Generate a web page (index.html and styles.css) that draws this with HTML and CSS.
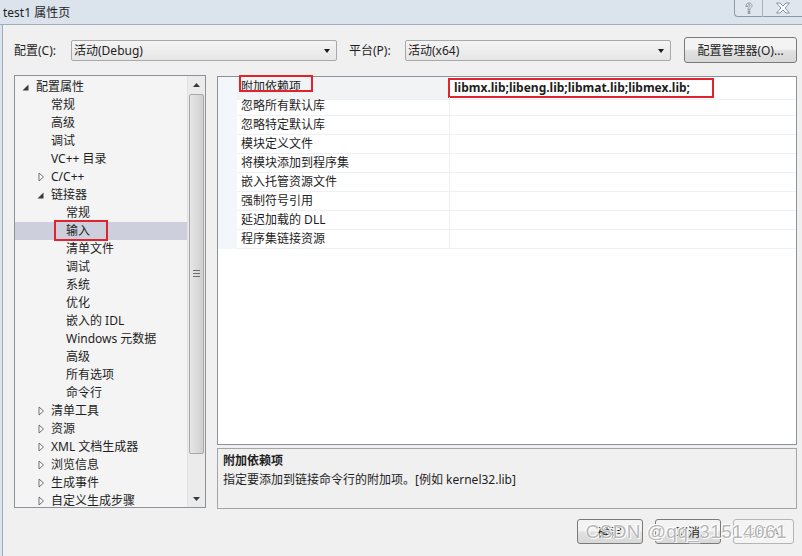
FILE: index.html
```html
<!DOCTYPE html>
<html>
    <head>
        <title>test1 属性页</title>
        <link rel="stylesheet" href="styles.css">
    </head>
    <body>
        <div class="titlebar">
            <span class="title">test1 属性页</span>
            <div class="caption-btns">
                <div class="cap-btn help">
                    <svg width="12" height="13" viewBox="0 0 12 13">
                        <path d="M3 4.5 C3 2 4.5 1 6 1 C7.8 1 9 2.2 9 3.8 C9 5.4 7.5 5.8 6.8 6.8 L6.8 8.2 L5.2 8.2 L5.2 6.4 C5.6 5.2 7.3 4.8 7.3 3.8 C7.3 3 6.7 2.5 6 2.5 C5.2 2.5 4.7 3.1 4.7 4.5 Z" fill="#fff" stroke="#7d8896" stroke-width="0.9"/>
                        <rect x="5.2" y="9.6" width="1.6" height="1.8" fill="#fff" stroke="#7d8896" stroke-width="0.9"/>
                    </svg>
                </div>
                <div class="cap-btn close">
                    <svg width="16" height="12" viewBox="0 0 16 12">
                        <path d="M1.5 1 L5 1 L8 4 L11 1 L14.5 1 L10 6 L14.5 11 L11 11 L8 8 L5 11 L1.5 11 L6 6 Z" fill="#fff" stroke="#7d8896" stroke-width="0.9"/>
                    </svg>
                </div>
            </div>
        </div>

        <div class="dialog">
            <div class="config-row">
                <label class="cfg-label">配置(C):</label>
                <div class="combo"><span>活动(Debug)</span><i class="drop"></i></div>
                <label class="cfg-label plat">平台(P):</label>
                <div class="combo"><span>活动(x64)</span><i class="drop"></i></div>
                <button class="btn cfg-btn">配置管理器(O)...</button>
            </div>

            <div class="main">
                <div class="tree">
                    <div class="tree-list">
                        <div class="node l0"><span class="tw"><svg class="open" width="7" height="7"><polygon points="6.5,0.5 6.5,6.5 0.5,6.5" fill="#3a3a3a"/></svg></span>配置属性</div>
                        <div class="node l1"><span class="tw"></span>常规</div>
                        <div class="node l1"><span class="tw"></span>高级</div>
                        <div class="node l1"><span class="tw"></span>调试</div>
                        <div class="node l1"><span class="tw"></span>VC++ 目录</div>
                        <div class="node l1"><span class="tw"><svg class="shut" width="7" height="10"><polygon points="1,1 5.5,5 1,9" fill="#fff" stroke="#6f6f6f"/></svg></span>C/C++</div>
                        <div class="node l1"><span class="tw"><svg class="open" width="7" height="7"><polygon points="6.5,0.5 6.5,6.5 0.5,6.5" fill="#3a3a3a"/></svg></span>链接器</div>
                        <div class="node l2"><span class="tw"></span>常规</div>
                        <div class="node l2 selected"><span class="tw"></span><span class="marked">输入</span></div>
                        <div class="node l2"><span class="tw"></span>清单文件</div>
                        <div class="node l2"><span class="tw"></span>调试</div>
                        <div class="node l2"><span class="tw"></span>系统</div>
                        <div class="node l2"><span class="tw"></span>优化</div>
                        <div class="node l2"><span class="tw"></span>嵌入的 IDL</div>
                        <div class="node l2"><span class="tw"></span>Windows 元数据</div>
                        <div class="node l2"><span class="tw"></span>高级</div>
                        <div class="node l2"><span class="tw"></span>所有选项</div>
                        <div class="node l2"><span class="tw"></span>命令行</div>
                        <div class="node l1"><span class="tw"><svg class="shut" width="7" height="10"><polygon points="1,1 5.5,5 1,9" fill="#fff" stroke="#6f6f6f"/></svg></span>清单工具</div>
                        <div class="node l1"><span class="tw"><svg class="shut" width="7" height="10"><polygon points="1,1 5.5,5 1,9" fill="#fff" stroke="#6f6f6f"/></svg></span>资源</div>
                        <div class="node l1"><span class="tw"><svg class="shut" width="7" height="10"><polygon points="1,1 5.5,5 1,9" fill="#fff" stroke="#6f6f6f"/></svg></span>XML 文档生成器</div>
                        <div class="node l1"><span class="tw"><svg class="shut" width="7" height="10"><polygon points="1,1 5.5,5 1,9" fill="#fff" stroke="#6f6f6f"/></svg></span>浏览信息</div>
                        <div class="node l1"><span class="tw"><svg class="shut" width="7" height="10"><polygon points="1,1 5.5,5 1,9" fill="#fff" stroke="#6f6f6f"/></svg></span>生成事件</div>
                        <div class="node l1"><span class="tw"><svg class="shut" width="7" height="10"><polygon points="1,1 5.5,5 1,9" fill="#fff" stroke="#6f6f6f"/></svg></span>自定义生成步骤</div>
                    </div>
                    <div class="vscroll">
                        <div class="arrow up"><svg width="7" height="4"><polygon points="3.5,0 7,4 0,4" fill="#3a3a3a"/></svg></div>
                        <div class="track">
                            <div class="thumb"><span class="grip"></span></div>
                        </div>
                        <div class="arrow down"><svg width="7" height="4"><polygon points="0,0 7,0 3.5,4" fill="#3a3a3a"/></svg></div>
                    </div>
                </div>

                <div class="right">
                    <div class="grid">
                        <div class="prow first">
                            <div class="gutter"></div>
                            <div class="pname marked-name">附加依赖项</div>
                            <div class="pval marked-val">libmx.lib;libeng.lib;libmat.lib;libmex.lib;</div>
                        </div>
                        <div class="prow"><div class="gutter"></div><div class="pname">忽略所有默认库</div><div class="pval"></div></div>
                        <div class="prow"><div class="gutter"></div><div class="pname">忽略特定默认库</div><div class="pval"></div></div>
                        <div class="prow"><div class="gutter"></div><div class="pname">模块定义文件</div><div class="pval"></div></div>
                        <div class="prow"><div class="gutter"></div><div class="pname">将模块添加到程序集</div><div class="pval"></div></div>
                        <div class="prow"><div class="gutter"></div><div class="pname">嵌入托管资源文件</div><div class="pval"></div></div>
                        <div class="prow"><div class="gutter"></div><div class="pname">强制符号引用</div><div class="pval"></div></div>
                        <div class="prow"><div class="gutter"></div><div class="pname">延迟加载的 DLL</div><div class="pval"></div></div>
                        <div class="prow"><div class="gutter"></div><div class="pname">程序集链接资源</div><div class="pval"></div></div>
                    </div>
                    <div class="desc">
                        <div class="desc-title">附加依赖项</div>
                        <div class="desc-text">指定要添加到链接命令行的附加项。[例如 kernel32.lib]</div>
                    </div>
                </div>
            </div>

            <div class="buttons">
                <button class="btn">确定</button>
                <button class="btn">取消</button>
                <button class="btn apply" disabled>应用(A)</button>
                <span class="watermark">CSDN @qq_31514061</span>
            </div>
        </div>
    </body>
</html>
```

FILE: styles.css
```css
html, body {
    margin: 0;
    padding: 0;
}
body {
    width: 802px;
    height: 556px;
    overflow: hidden;
    background: #dbe3ec;
    font-family: "Noto Sans", "Noto Sans CJK SC", sans-serif;
    font-size: 12px;
    color: #1e1e1e;
}
.titlebar {
    height: 25px;
    display: flex;
    align-items: center;
    padding-left: 3px;
    position: relative;
    border-bottom: 1px solid #a3acb7;
    box-sizing: border-box;
}
.title {
    font-size: 12px;
}
.caption-btns {
    position: absolute;
    right: 0;
    top: 0;
    display: flex;
}
.cap-btn {
    height: 16px;
    display: flex;
    align-items: center;
    justify-content: center;
    border-bottom: 1px solid #8d99a8;
    background: #dfe6ee;
}
.help {
    width: 27px;
    border-left: 1px solid #8d99a8;
    border-right: 1px solid #a7b2be;
    border-bottom-left-radius: 4px;
}
.close {
    width: 39px;
}

.dialog {
    margin-left: 2px;
    border-left: 1px solid #a3acb7;
    background: #f0f0f0;
    height: 531px;
    box-sizing: border-box;
    padding: 12px 5px 0 11px;
    position: relative;
}

/* config row */
.config-row {
    display: flex;
    align-items: center;
    height: 26px;
}
.cfg-label {
    width: 57px;
}
.cfg-label.plat {
    margin-left: 12px;
    width: 56px;
}
.combo {
    width: 266px;
    height: 21px;
    box-sizing: border-box;
    border: 1px solid #a9a9a9;
    border-radius: 2px;
    background: linear-gradient(#f4f4f4, #e6e6e6);
    display: flex;
    align-items: center;
    padding-left: 2px;
    position: relative;
}
.drop {
    position: absolute;
    right: 6px;
    top: 8px;
    width: 0;
    height: 0;
    border-left: 3.5px solid transparent;
    border-right: 3.5px solid transparent;
    border-top: 4px solid #1a1a1a;
}
.btn {
    font-family: inherit;
    font-size: 12px;
    color: #1e1e1e;
    border: 1px solid #7a7a7a;
    border-radius: 3px;
    background: linear-gradient(#f3f3f3 45%, #e0e0e0 55%, #d8d8d8);
    padding: 0;
}
.cfg-btn {
    margin-left: 13px;
    width: 113px;
    height: 26px;
}

/* main */
.main {
    display: flex;
    align-items: flex-start;
    margin-top: 12px;
    height: 434px;
}
.tree {
    width: 192px;
    height: 433px;
    box-sizing: border-box;
    border: 1px solid #8d9199;
    background: #f4f4f4;
    display: flex;
    overflow: hidden;
}
.tree-list {
    flex: 1;
    padding-top: 2px;
    overflow: hidden;
}
.node {
    height: 18px;
    line-height: 18px;
    display: flex;
    align-items: center;
    white-space: nowrap;
    position: relative;
}
.node.l0 { padding-left: 6px; }
.node.l1 { padding-left: 21px; }
.node.l2 { padding-left: 36px; }
.node.selected {
    background: #cdd0dc;
}
.tw {
    width: 15px;
    height: 18px;
    display: flex;
    align-items: center;
    flex-shrink: 0;
}
.tw .open {
    margin-left: 1px;
}
.tw .shut {
    margin-left: 2px;
}
.marked {
    position: relative;
}
.marked::after {
    content: "";
    position: absolute;
    left: -12px;
    top: -2px;
    width: 50px;
    height: 17px;
    border: 2px solid #e0232d;
}

.vscroll {
    width: 17px;
    display: flex;
    flex-direction: column;
    background: #ebebeb;
    border-left: 1px solid #e2e2e2;
}
.arrow {
    height: 17px;
    display: flex;
    align-items: center;
    justify-content: center;
}
.track {
    flex: 1;
    padding: 1px 1px;
}
.thumb {
    height: 360px;
    box-sizing: border-box;
    border: 1px solid #a8a8a8;
    border-radius: 2px;
    background: linear-gradient(90deg, #e6e6e6, #d9d9d9 60%, #cfcfcf);
    display: flex;
    align-items: center;
    justify-content: center;
}
.grip {
    width: 7px;
    height: 9px;
    background: repeating-linear-gradient(#6f6f6f 0 1px, transparent 1px 3px);
}

/* property grid */
.right {
    margin-left: 11px;
    width: 580px;
    display: flex;
    flex-direction: column;
}
.grid {
    margin-top: 1px;
    height: 369px;
    box-sizing: border-box;
    border: 1px solid #8d9199;
    background: #fff;
}
.prow {
    display: grid;
    grid-template-columns: 19px 213px 1fr;
    height: 19px;
    line-height: 18px;
}
.prow.first {
    height: 20px;
    line-height: 19px;
}
.gutter {
    background: #f3f6fb;
}
.pname {
    padding-left: 4px;
    border-bottom: 1px solid #edf0f5;
    border-right: 1px solid #edf0f5;
    white-space: nowrap;
    position: relative;
}
.prow.first .pname {
    background: #f2f3f5;
}
.pval {
    padding-left: 4px;
    border-bottom: 1px solid #edf0f5;
    white-space: nowrap;
    position: relative;
}
.marked-val {
    font-weight: bold;
    line-height: 22px;
}
.marked-name::after {
    content: "";
    position: absolute;
    left: 2px;
    top: -2px;
    width: 70px;
    height: 13px;
    border: 2px solid #e0232d;
}
.marked-val::after {
    content: "";
    position: absolute;
    left: -2px;
    top: 1px;
    width: 262px;
    height: 16px;
    border: 2px solid #e0232d;
}
.desc {
    margin-top: 3px;
    height: 61px;
    box-sizing: border-box;
    border: 1px solid #a5a5a5;
    padding: 2px 5px;
    line-height: 19px;
}
.desc-title {
    font-weight: bold;
}

/* bottom buttons */
.buttons {
    display: flex;
    justify-content: flex-end;
    gap: 12px;
    margin-top: 10px;
    padding-right: 3px;
    position: relative;
}
.buttons .btn {
    width: 66px;
    height: 25px;
}
.buttons .apply {
    width: 61px;
    color: #a0a0a0;
    border-color: #b5b5b5;
    background: #f4f4f4;
}
.watermark {
    position: absolute;
    right: 10px;
    top: 2px;
    font-family: "Liberation Sans", sans-serif;
    font-size: 19px;
    letter-spacing: 0.4px;
    color: rgba(150, 150, 150, 0.7);
    text-shadow: 0 0 1px #fff, 1px 1px 0 #fff, -1px -1px 0 #fff;
    pointer-events: none;
}
```
